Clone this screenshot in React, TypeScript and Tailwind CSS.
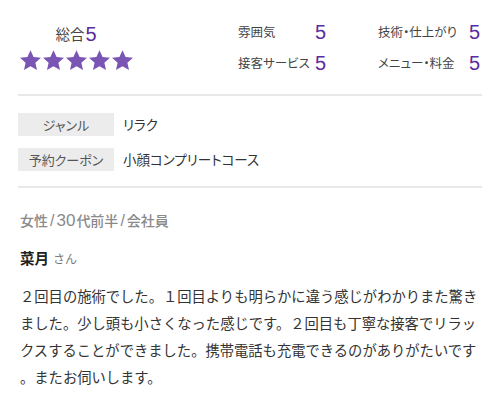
import React from "react";

const Star = () => (
  <svg width="23" height="23" viewBox="0 0 24 24" className="block">
    <path
      d="M12 1.2l3.2 7.1 7.7.8-5.8 5.2 1.7 7.6L12 18l-6.8 3.9 1.7-7.6L1.1 9.1l7.7-.8z"
      fill="#7a55b4"
    />
  </svg>
);

const Rating = ({ label, w }: { label: string; w: string }) => (
  <div className="flex items-center h-[22px]">
    <span className={`text-[12.5px] text-[#444] whitespace-nowrap [font-feature-settings:'palt'] ${w}`}>{label}</span>
    <span className="text-[20px] leading-none text-[#5a2ca0] font-['Liberation_Sans',sans-serif]">5</span>
  </div>
);

export default function App() {
  return (
    <div className="w-[500px] h-[400px] bg-white overflow-hidden font-['Noto_Sans_CJK_JP',sans-serif] text-[#333]">
      <div className="px-[18px]">
        <div className="flex pt-[21px] h-[94px]">
          <div className="w-[119px] pt-[3px] flex flex-col items-center">
            <div className="flex items-center h-[20px]">
              <span className="text-[14.5px] leading-none text-[#444] [font-feature-settings:'palt']">総合</span>
              <span className="ml-[1px] text-[20px] leading-none text-[#5a2ca0] font-['Liberation_Sans',sans-serif]">5</span>
            </div>
            <div className="flex mt-[5px]">
              <Star />
              <Star />
              <Star />
              <Star />
              <Star />
            </div>
          </div>
          <div className="ml-[104px] grid grid-cols-[140px_104px] gap-y-[9px] content-start">
            <Rating label="雰囲気" w="w-[77px]" />
            <Rating label="技術・仕上がり" w="w-[91px]" />
            <Rating label="接客サービス" w="w-[77px]" />
            <Rating label="メニュー・料金" w="w-[91px]" />
          </div>
        </div>
        <div className="h-[2px] bg-[#e8e8e8]" />
        <div className="pt-[17px] pb-[15px] flex flex-col gap-[12px]">
          <div className="flex items-center">
            <div className="w-[96px] h-[23px] bg-[#ececec] flex items-center justify-center text-[13px] text-[#555] [font-feature-settings:'palt']">ジャンル</div>
            <div className="ml-[9px] text-[13.5px] text-[#333] [font-feature-settings:'palt']">リラク</div>
          </div>
          <div className="flex items-center">
            <div className="w-[96px] h-[23px] bg-[#ececec] flex items-center justify-center text-[13px] text-[#555] [font-feature-settings:'palt']">予約クーポン</div>
            <div className="ml-[9px] text-[13.5px] text-[#333] [font-feature-settings:'palt']">小顔コンプリートコース</div>
          </div>
        </div>
        <div className="h-[2px] bg-[#e8e8e8]" />
        <div className="pl-[2px] pt-[21px] text-[14px] leading-[22px] font-medium text-[#8a8a8a] flex items-baseline whitespace-nowrap">
          <span>女性</span>
          <span className="mx-[2px] font-['Liberation_Sans',sans-serif] text-[16px] font-normal">/</span>
          <span className="font-['Liberation_Sans',sans-serif] text-[17px] font-normal">30</span>
          <span className="ml-[1px]">代前半</span>
          <span className="mx-[2px] font-['Liberation_Sans',sans-serif] text-[16px] font-normal">/</span>
          <span>会社員</span>
        </div>
        <div className="pl-[2px] mt-[15px] flex items-baseline leading-[22px]">
          <span className="text-[14.5px] font-bold text-[#222]">菜月</span>
          <span className="ml-[4px] text-[12px] text-[#777]">さん</span>
        </div>
        <div className="pl-[2px] mt-[12px] text-[14.3px] leading-[27px] text-[#333] whitespace-nowrap">
          ２回目の施術でした。１回目よりも明らかに違う感じがわかりまた驚き<br />
          ました。少し頭も小さくなった感じです。２回目も丁寧な接客でリラッ<br />
          クスすることができました。携帯電話も充電できるのがありがたいです<br />
          。またお伺いします。
        </div>
      </div>
    </div>
  );
}
